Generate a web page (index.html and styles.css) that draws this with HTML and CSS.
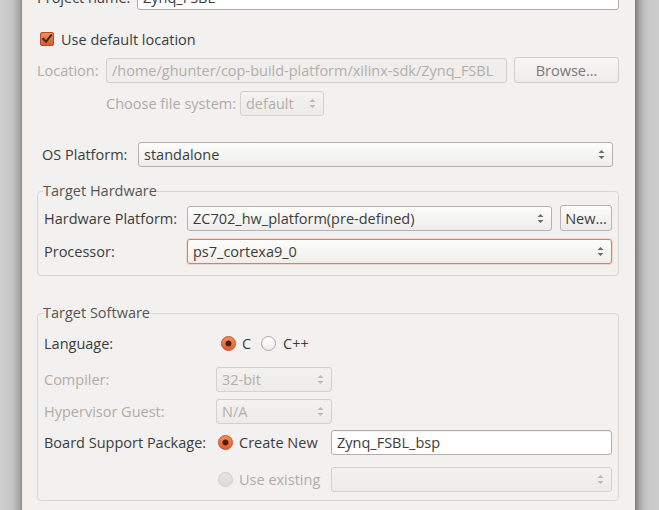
FILE: index.html
```html
<!DOCTYPE html>
<html>
<head>
<meta charset="utf-8">
<link rel="stylesheet" href="styles.css">
</head>
<body>
<div class="screen">
  <div class="shade-left"></div>
  <div class="dialog">
    <div class="row row-name">
      <span class="label w-name">Project name:</span>
      <div class="field grow">Zynq_FSBL</div>
    </div>

    <div class="row row-check">
      <span class="check"><svg width="12" height="12" viewBox="0 0 12 12"><path d="M2.2 5.8 L5 8.8 L10.2 2.2" fill="none" stroke="#3a2a22" stroke-width="2.1" stroke-linecap="round" stroke-linejoin="round"/></svg></span>
      <span class="check-label">Use default location</span>
    </div>

    <div class="row row-loc">
      <span class="label w-loc disabled-text">Location:</span>
      <div class="field field-dis grow">/home/ghunter/cop-build-platform/xilinx-sdk/Zynq_FSBL</div>
      <div class="button button-dis w-browse">Browse...</div>
    </div>

    <div class="row row-fs">
      <span class="label w-fs disabled-text">Choose file system:</span>
      <div class="combo combo-dis w-fscombo"><span>default</span><svg class="spin" width="7" height="11" viewBox="0 0 7 11"><path d="M0.5 4 L3.5 1 L6.5 4Z M0.5 7 L3.5 10 L6.5 7Z"/></svg></div>
    </div>

    <div class="row row-os">
      <span class="label w-os">OS Platform:</span>
      <div class="combo grow"><span>standalone</span><svg class="spin" width="7" height="11" viewBox="0 0 7 11"><path d="M0.5 4 L3.5 1 L6.5 4Z M0.5 7 L3.5 10 L6.5 7Z"/></svg></div>
    </div>

    <fieldset class="group group-hw">
      <legend>Target Hardware</legend>
      <div class="row row-hw">
        <span class="label w-hw">Hardware Platform:</span>
        <div class="combo grow"><span>ZC702_hw_platform(pre-defined)</span><svg class="spin" width="7" height="11" viewBox="0 0 7 11"><path d="M0.5 4 L3.5 1 L6.5 4Z M0.5 7 L3.5 10 L6.5 7Z"/></svg></div>
        <div class="button w-new">New...</div>
      </div>
      <div class="row row-proc">
        <span class="label w-hw">Processor:</span>
        <div class="combo combo-focus grow"><span>ps7_cortexa9_0</span><svg class="spin" width="7" height="11" viewBox="0 0 7 11"><path d="M0.5 4 L3.5 1 L6.5 4Z M0.5 7 L3.5 10 L6.5 7Z"/></svg></div>
      </div>
    </fieldset>

    <fieldset class="group group-sw">
      <legend>Target Software</legend>
      <div class="row row-lang">
        <span class="label w-lang">Language:</span>
        <span class="radio on"></span>
        <span class="radio-label lang-c">C</span>
        <span class="radio"></span>
        <span class="radio-label lang-cpp">C++</span>
      </div>
      <div class="row row-comp">
        <span class="label w-comp disabled-text">Compiler:</span>
        <div class="combo combo-dis w-small"><span>32-bit</span><svg class="spin" width="7" height="11" viewBox="0 0 7 11"><path d="M0.5 4 L3.5 1 L6.5 4Z M0.5 7 L3.5 10 L6.5 7Z"/></svg></div>
      </div>
      <div class="row row-hyp">
        <span class="label w-comp disabled-text">Hypervisor Guest:</span>
        <div class="combo combo-dis w-small"><span>N/A</span><svg class="spin" width="7" height="11" viewBox="0 0 7 11"><path d="M0.5 4 L3.5 1 L6.5 4Z M0.5 7 L3.5 10 L6.5 7Z"/></svg></div>
      </div>
      <div class="row row-bsp">
        <span class="label w-bsp">Board Support Package:</span>
        <div class="radio-opt">
          <span class="radio on"></span>
          <span class="radio-label">Create New</span>
        </div>
        <div class="field grow">Zynq_FSBL_bsp</div>
      </div>
      <div class="row row-exist">
        <div class="radio-opt">
          <span class="radio dis"></span>
          <span class="radio-label disabled-text">Use existing</span>
        </div>
        <div class="combo combo-dis grow"><span></span><svg class="spin" width="7" height="11" viewBox="0 0 7 11"><path d="M0.5 4 L3.5 1 L6.5 4Z M0.5 7 L3.5 10 L6.5 7Z"/></svg></div>
      </div>
    </fieldset>
  </div>
  <div class="shade-right"></div>
</div>
</body>
</html>
```

FILE: styles.css
```css
* { box-sizing: border-box; }

body {
  margin: 0;
  font-family: "Open Sans", "Noto Sans", sans-serif;
  font-size: 14.5px;
  color: #3c3c3c;
}

.screen {
  display: flex;
  width: 659px;
  height: 510px;
  overflow: hidden;
}

.shade-left {
  width: 22px;
  flex-shrink: 0;
  background: linear-gradient(to right, #cdcdcd 0, #c6c6c6 12px, #a8a8a8 19px, #8e8e8e 22px);
}

.shade-right {
  flex: 1;
  background: linear-gradient(to right, #7a7a7a 0, #a3a3a3 4px, #bfbfbf 9px, #c9c9c9 14px, #cccccc 100%);
}

.dialog {
  width: 613px;
  flex-shrink: 0;
  background: #f2f1f0;
  padding: 0 16px 0 15px;
  display: flex;
  flex-direction: column;
}

.row {
  display: flex;
  align-items: center;
  flex-shrink: 0;
}

.grow { flex: 1; min-width: 0; }

.label { flex-shrink: 0; white-space: nowrap; }
.disabled-text { color: #b1aca6; }

/* text fields */
.field {
  height: 25px;
  background: #ffffff;
  border: 1px solid #b2ada7;
  border-radius: 3px;
  padding: 0 5px;
  display: flex;
  align-items: center;
  white-space: nowrap;
  overflow: hidden;
  box-shadow: inset 0 1px 1px rgba(0, 0, 0, 0.06);
}
.field-dis {
  background: #efeeec;
  border-color: #d3cfca;
  color: #b3aea8;
  box-shadow: none;
}

/* buttons */
.button {
  height: 26px;
  border: 1px solid #b8b3ad;
  border-radius: 3px;
  background: linear-gradient(#fcfcfb, #edebe9);
  display: flex;
  align-items: center;
  justify-content: center;
  flex-shrink: 0;
  white-space: nowrap;
}
.button-dis {
  border-color: #d2cec9;
  background: linear-gradient(#f7f6f5, #eeecea);
  color: #7d7873;
}

/* combos */
.combo {
  height: 25px;
  border: 1px solid #b6b1ab;
  border-radius: 3px;
  background: linear-gradient(#fdfdfc, #eeedeb);
  display: flex;
  align-items: center;
  padding: 0 7px 0 5px;
  white-space: nowrap;
  flex-shrink: 0;
}
.combo span { flex: 1; overflow: hidden; }
.combo .spin { fill: #6b6b6b; flex-shrink: 0; }
.combo-dis {
  border-color: #d4d0cb;
  background: linear-gradient(#f3f2f0, #ecebe9);
  color: #b3aea8;
}
.combo-dis .spin { fill: #bdb8b3; }
.combo-focus {
  border-color: #ee7a4b;
  box-shadow: 0 0 0 1px rgba(240, 130, 85, 0.25);
}

/* checkbox */
.check {
  width: 14px;
  height: 14px;
  border: 1px solid #b64c25;
  border-radius: 2px;
  background: linear-gradient(#f48b5d, #e0592a);
  display: flex;
  align-items: center;
  justify-content: center;
  flex-shrink: 0;
}
.check svg { display: block; }

/* radios */
.radio {
  width: 15px;
  height: 15px;
  border-radius: 50%;
  border: 1px solid #aea9a3;
  background: linear-gradient(#ffffff, #efeeec);
  flex-shrink: 0;
}
.radio.on {
  border-color: #bf5228;
  background:
    radial-gradient(circle at 50% 50%, #4a2014 0, #4a2014 2.6px, rgba(74, 32, 20, 0) 3.4px),
    linear-gradient(#f58d5f, #e15d2c);
}
.radio.dis {
  border-color: #d0ccc7;
  background: linear-gradient(#e6e4e1, #dddad6);
}

.radio-opt {
  display: flex;
  align-items: center;
  flex-shrink: 0;
  width: 113px;
}
.radio-label { margin-left: 6px; white-space: nowrap; }

/* rows, top area */
.row-name { height: 25px; margin-top: -15px; }
.w-name { width: 100px; }

.row-check { height: 18px; margin-top: 20px; padding-left: 3px; }
.check-label { margin-left: 7px; }

.row-loc { height: 26px; margin-top: 9px; }
.w-loc { width: 69px; }
.row-loc .field { margin-right: 7px; }
.w-browse { width: 105px; }

.row-fs { height: 25px; margin-top: 8px; padding-left: 69px; }
.w-fs { width: 134px; }
.w-fscombo { width: 84px; }

.row-os { height: 25px; margin-top: 26px; padding-left: 5px; padding-right: 6px; }
.w-os { width: 96px; }

/* groups */
.group {
  margin: 0;
  border: 1px solid #d9d5d0;
  border-radius: 4px;
  padding: 0 6px 11px 5px;
  min-width: 0;
  flex-shrink: 0;
}
.group legend {
  padding: 0;
  line-height: 16px;
  height: 16px;
  color: #555555;
}
.group .row { padding-left: 1px; }

.group-hw { margin-top: 16px; }
.row-hw { height: 26px; margin-top: 6px; }
.w-hw { width: 143px; }
.row-hw .combo { margin-right: 8px; }
.w-new { width: 52px; }
.row-proc { height: 25px; margin-top: 8px; }

.group-sw { margin-top: 29px; padding-bottom: 9px; }
.row-lang { height: 24px; margin-top: 10px; }
.w-lang { width: 177px; }
.lang-c { width: 12px; margin-right: 7px; }
.lang-cpp { margin-left: 7px; }

.row-comp { height: 24px; margin-top: 12px; }
.w-comp { width: 172px; }
.w-small { width: 116px; }
.row-hyp { height: 24px; margin-top: 8px; }

.row-bsp { height: 25px; margin-top: 7px; }
.w-bsp { width: 174px; }

.group .row-exist { height: 24px; margin-top: 12px; padding-left: 175px; }
```
